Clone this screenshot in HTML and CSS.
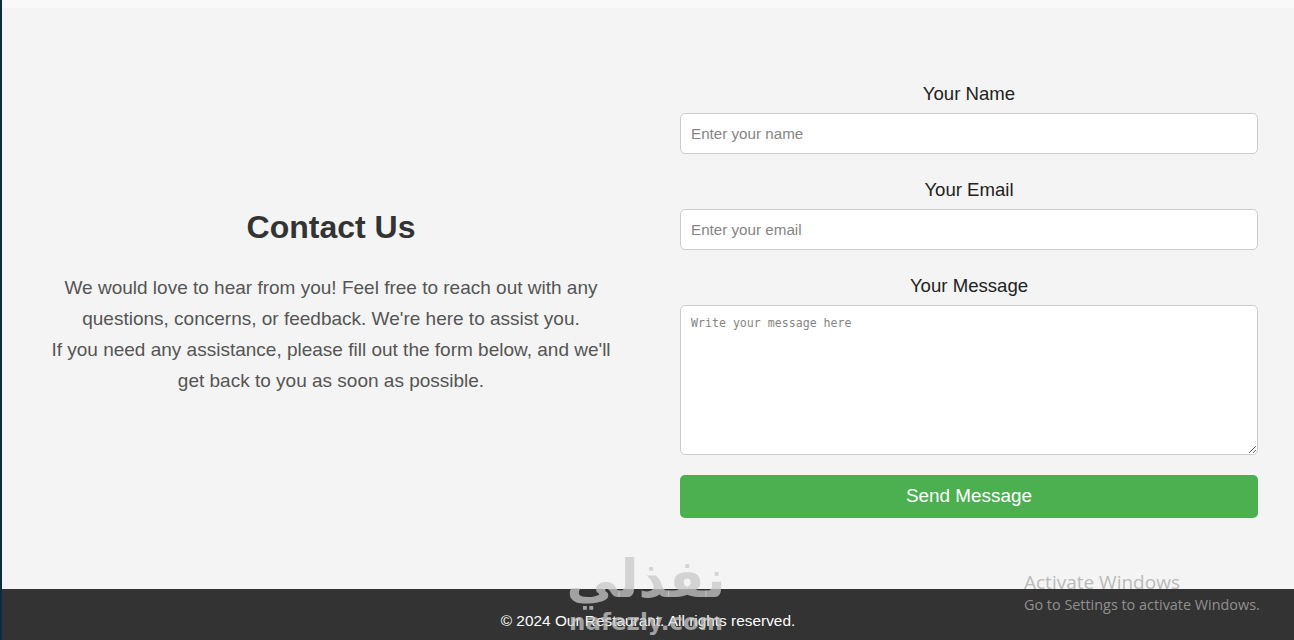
FILE: index.html
```html
<!DOCTYPE html>
<html lang="en">
<head>
    <meta charset="UTF-8">
    <meta name="viewport" content="width=device-width, initial-scale=1.0">
    <title>Contact Us - Our Restaurant</title>
    <link rel="stylesheet" href="styles.css">
</head>
<body>
    <div class="page">
        <div class="topbar"></div>
        <section class="contact">
            <div class="contact-info">
                <h2>Contact Us</h2>
                <p>We would love to hear from you! Feel free to reach out with any questions, concerns, or feedback. We're here to assist you.<br>If you need any assistance, please fill out the form below, and we'll get back to you as soon as possible.</p>
            </div>
            <form class="contact-form">
                <label for="name">Your Name</label>
                <input type="text" id="name" placeholder="Enter your name">
                <label for="email">Your Email</label>
                <input type="email" id="email" placeholder="Enter your email">
                <label for="message">Your Message</label>
                <textarea id="message" placeholder="Write your message here"></textarea>
                <button type="submit">Send Message</button>
            </form>
        </section>
        <footer>
            <p>&copy; 2024 Our Restaurant. All rights reserved.</p>
        </footer>
    </div>

    <div class="watermark">
        <div class="wm-ar">نفذلي</div>
        <div class="wm-en">nafezly.com</div>
    </div>
    <div class="activate">
        <div class="act-title">Activate Windows</div>
        <div class="act-sub">Go to Settings to activate Windows.</div>
    </div>
</body>
</html>
```

FILE: styles.css
```css
body {
    margin: 0;
    font-family: "Liberation Sans", Arial, sans-serif;
    background-color: #f4f4f4;
    overflow: hidden;
}
.page {
    border-left: 2px solid #0f2a47;
    min-height: 640px;
}
.topbar {
    height: 8px;
    background-color: #f9f9f9;
}
.contact {
    display: flex;
    align-items: center;
    gap: 58px;
    padding: 73px 36px 70px 38px;
    min-height: 438px;
}
.contact-info {
    flex: 0 0 582px;
    text-align: center;
    padding-top: 4px;
}
.contact-info h2 {
    margin: 0 0 26px;
    font-size: 32px;
    color: #333;
}
.contact-info p {
    margin: 0;
    font-size: 19px;
    line-height: 31px;
    color: #555;
}
.contact-form {
    flex: 0 0 578px;
    display: flex;
    flex-direction: column;
}
.contact-form label {
    display: block;
    text-align: center;
    font-size: 18.6px;
    line-height: 21px;
    color: #222;
    margin-bottom: 9px;
}
.contact-form input,
.contact-form textarea {
    width: 100%;
    box-sizing: border-box;
    padding: 10px;
    border: 1px solid #ccc;
    border-radius: 5px;
    background-color: #fff;
    margin: 0 0 25px;
}
.contact-form input {
    height: 41px;
    font-family: "Liberation Sans", Arial, sans-serif;
    font-size: 15.2px;
}
.contact-form textarea {
    height: 150px;
    font-family: "DejaVu Sans Mono", monospace;
    font-size: 11.6px;
    margin-bottom: 20px;
    resize: vertical;
}
::placeholder {
    color: #858585;
}
.contact-form button {
    height: 43px;
    border: none;
    border-radius: 5px;
    background-color: #4caf50;
    color: #fff;
    font-family: "Liberation Sans", Arial, sans-serif;
    font-size: 18.9px;
    cursor: pointer;
}
footer {
    background-color: #333;
    color: #fff;
    text-align: center;
    padding: 22px 0 30px;
}
footer p {
    margin: 0;
    font-size: 15.4px;
    line-height: 20px;
}
.watermark {
    position: absolute;
    left: 560px;
    top: 551px;
    width: 172px;
    text-align: center;
    color: rgba(200, 200, 200, 0.75);
    pointer-events: none;
}
.wm-ar {
    font-family: "DejaVu Sans", sans-serif;
    font-weight: bold;
    font-size: 52px;
    line-height: 56px;
}
.wm-en {
    font-family: "DejaVu Sans", sans-serif;
    font-weight: bold;
    font-size: 23px;
    line-height: 30px;
}
.activate {
    position: absolute;
    left: 1024px;
    top: 569px;
    color: rgba(170, 170, 170, 0.8);
    font-family: "Open Sans", sans-serif;
    pointer-events: none;
}
.act-title {
    font-size: 19px;
    line-height: 26px;
}
.act-sub {
    font-size: 14.4px;
    line-height: 20px;
}
```
